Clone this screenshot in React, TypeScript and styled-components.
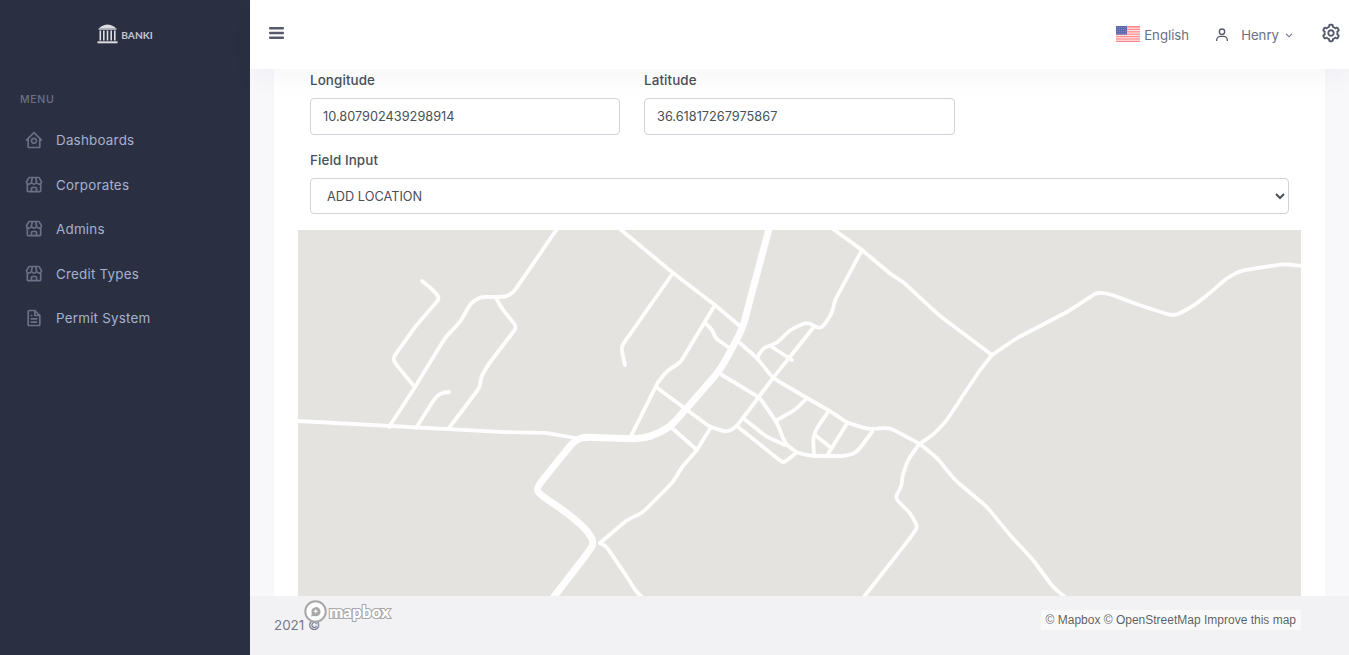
import React from "react";
import styled, { createGlobalStyle } from "styled-components";
import { BiHomeCircle, BiStore, BiFile, BiUser, BiCog, BiChevronDown } from "react-icons/bi";

const FONT = `Inter, "Noto Sans", "Liberation Sans", sans-serif`;

const Global = createGlobalStyle`
  html, body { margin: 0; padding: 0; height: 100%; overflow: hidden; background: #f8f8fb; }
  body { font-family: ${FONT}; font-size: 13.6px; color: #495057; }
  * { box-sizing: border-box; }
`;

const Shell = styled.div`
  display: flex;
  width: 100%;
  height: 100vh;
  overflow: hidden;
`;

const Sidebar = styled.aside`
  flex: 0 0 250px;
  background: #2a3042;
  display: flex;
  flex-direction: column;
`;

const LogoBox = styled.div`
  height: 70px;
  display: flex;
  align-items: center;
  justify-content: center;
  gap: 3px;
  padding-bottom: 2px;
`;

const LogoText = styled.span`
  font: 700 10.2px Lato, sans-serif;
  color: #c4c6cb;
  margin-top: 2px;
`;

const MenuTitle = styled.div`
  margin-top: 20px;
  padding-left: 20px;
  font-size: 10.5px;
  line-height: 20px;
  font-weight: 500;
  letter-spacing: 0.7px;
  color: #6a7187;
`;

const Nav = styled.nav`
  margin-top: 8px;
  display: flex;
  flex-direction: column;
`;

const NavRow = styled.a`
  display: flex;
  align-items: center;
  height: 44.5px;
  padding-left: 24px;
  color: #a6b0cf;
  font-size: 13.4px;
  letter-spacing: 0.22px;
  svg { flex: 0 0 20px; margin-right: 12px; color: #6a7187; }
`;

const Main = styled.div`
  flex: 1;
  min-width: 0;
  display: flex;
  flex-direction: column;
`;

const Header = styled.header`
  flex: 0 0 69px;
  background: #fff;
  display: flex;
  align-items: center;
  padding: 0 7px 3px 19px;
  box-shadow: 0 12px 24px rgba(18, 38, 63, 0.03);
  position: relative;
  z-index: 2;
  color: #555b6d;
`;

const Spacer = styled.div`
  flex: 1;
`;

const Burger = styled.svg`
  width: 15px;
  height: 12px;
  display: block;
`;

const HeaderText = styled.span`
  font-size: 13.2px;
  color: #6b7082;
  margin-top: 3px;
`;

const Lang = styled.div`
  display: flex;
  align-items: center;
  gap: 4px;
  margin-right: 25px;
`;

const Flag = styled.svg`
  width: 24px;
  height: 16px;
  margin-top: 2px;
  display: block;
`;

const UserBox = styled.div`
  display: flex;
  align-items: center;
  margin-right: 24px;
  svg:first-child { margin-right: 11px; margin-top: 3px; color: #555b6d; }
  svg:last-child { margin-left: 3px; margin-top: 3px; color: #74788d; }
`;

const Content = styled.main`
  flex: 1;
  min-height: 0;
  overflow: hidden;
  padding: 0 24px;
`;

const Card = styled.section`
  background: #fff;
  height: 100%;
  padding: 1px 24px 0;
`;

const FieldRow = styled.div`
  display: grid;
  grid-template-columns: 310px 311px;
  column-gap: 24px;
  padding: 0 12px;
`;

const Label = styled.label`
  display: block;
  font-size: 13.4px;
  line-height: 20px;
  font-weight: 500;
  letter-spacing: 0.1px;
  color: #495057;
  margin-bottom: 8px;
`;

const TextInput = styled.input`
  display: block;
  width: 100%;
  height: 37px;
  padding: 0 12px;
  border: 1px solid #ced4da;
  border-radius: 4px;
  background: #fff;
  color: #495057;
  font: 400 12.75px ${FONT};
`;

const SelectWrap = styled.div`
  margin-top: 15px;
  padding: 0 12px;
`;

const Select = styled.select`
  display: block;
  width: 100%;
  height: 36px;
  padding: 0 12px;
  border: 1px solid #ced4da;
  border-radius: 4px;
  background: #fff;
  color: #495057;
  font: 400 12.75px ${FONT};
`;

const MapBox = styled.div`
  margin-top: 16px;
  height: 366px;
  background: #e4e3df;
  overflow: hidden;
`;

const MapSvg = styled.svg`
  display: block;
  width: 100%;
  height: 100%;
`;

const Footer = styled.footer`
  flex: 0 0 59px;
  background: #f2f2f5;
  position: relative;
  padding: 19px 24px 0;
  font-size: 13.4px;
  line-height: 20px;
  color: #74788d;
`;

const MapboxLogo = styled.div`
  position: absolute;
  left: 54px;
  top: 4px;
  display: flex;
  align-items: center;
  gap: 2px;
`;

const MapboxWord = styled.span`
  font: 900 17px Lato, sans-serif;
  line-height: 22px;
  color: #fff;
  -webkit-text-stroke: 2.2px #a8a8a8;
  paint-order: stroke fill;
`;

const Attribution = styled.div`
  position: absolute;
  right: 48px;
  top: 14px;
  height: 20px;
  padding: 0 5px;
  background: rgba(255, 255, 255, 0.5);
  font: 400 12px/20px "Liberation Sans", Arial, sans-serif;
  color: rgba(0, 0, 0, 0.65);
  white-space: nowrap;
`;

type Pt = [number, number];

const roundedPath = (pts: Pt[], r = 5): string => {
  let d = `M${pts[0][0]} ${pts[0][1]}`;
  for (let i = 1; i < pts.length - 1; i++) {
    const [px, py] = pts[i - 1];
    const [x, y] = pts[i];
    const [nx, ny] = pts[i + 1];
    const l1 = Math.hypot(x - px, y - py);
    const l2 = Math.hypot(nx - x, ny - y);
    const a = Math.min(r, l1 / 2);
    const b = Math.min(r, l2 / 2);
    d += `L${(x - ((x - px) / l1) * a).toFixed(1)} ${(y - ((y - py) / l1) * a).toFixed(1)}`;
    d += `Q${x} ${y} ${(x + ((nx - x) / l2) * b).toFixed(1)} ${(y + ((ny - y) / l2) * b).toFixed(1)}`;
  }
  const last = pts[pts.length - 1];
  return `${d}L${last[0]} ${last[1]}`;
};

const thinRoads: Pt[][] = [
  [[422, 281], [433, 290], [440, 298], [415, 327], [393, 358], [395, 363], [413, 385]],
  [[389, 427], [415, 387], [445, 338], [460, 322], [471, 303], [480, 297], [505, 297], [513, 293], [557, 229]],
  [[496, 298], [503, 310], [517, 327], [488, 365], [481, 377], [480, 387], [465, 407], [449, 428]],
  [[449, 392], [441, 393], [435, 398], [416, 428]],
  [[625, 365], [621, 347], [673, 273]],
  [[620, 229], [673, 273], [715, 305], [741, 327]],
  [[298, 421], [500, 432], [547, 433], [575, 438]],
  [[600, 543], [627, 520], [642, 513], [673, 482], [682, 467], [697, 450], [711, 427]],
  [[600, 543], [606, 546], [627, 577], [637, 593], [645, 599]],
  [[715, 305], [680, 363], [668, 370], [658, 382], [655, 388], [631, 436]],
  [[705, 323], [713, 330], [715, 338], [731, 349]],
  [[656, 387], [710, 427], [727, 432], [735, 428], [743, 418], [773, 378], [813, 328]],
  [[672, 428], [697, 450]],
  [[722, 375], [760, 398], [777, 423], [785, 443], [797, 453], [813, 456], [847, 456], [857, 452], [872, 432]],
  [[740, 343], [757, 358], [773, 378], [807, 398], [828, 410], [848, 423], [868, 429], [890, 428], [920, 444], [937, 458], [955, 480], [987, 507], [1010, 535], [1033, 560], [1053, 587], [1066, 598]],
  [[777, 420], [795, 410], [807, 398]],
  [[743, 418], [767, 437], [785, 445]],
  [[738, 427], [782, 462], [785, 462], [796, 453]],
  [[828, 412], [817, 428], [813, 437], [814, 456]],
  [[815, 435], [830, 447]],
  [[846, 425], [828, 454]],
  [[757, 358], [763, 348], [777, 343], [790, 330], [807, 322], [818, 328], [823, 327], [832, 313], [835, 300], [862, 250]],
  [[772, 347], [792, 360]],
  [[833, 229], [862, 250], [893, 276], [902, 281], [940, 316], [992, 355]],
  [[992, 355], [1017, 338], [1067, 312], [1098, 292], [1113, 295], [1133, 303], [1170, 315], [1177, 315], [1193, 306], [1210, 293], [1227, 278], [1240, 271], [1283, 264], [1303, 266]],
  [[992, 355], [980, 370], [960, 400], [947, 420], [933, 435], [919, 444], [908, 460], [902, 477], [902, 485], [895, 498], [910, 513], [918, 527], [907, 542], [863, 598]],
];

const thickRoads: Pt[][] = [
  [[769, 229], [750, 300], [743, 327], [735, 343], [720, 370], [687, 408], [670, 427], [650, 437], [633, 439], [585, 437], [575, 440], [537, 487], [538, 493], [567, 513], [587, 530], [594, 542], [590, 550], [553, 598]],
];

const RoadMap = () => (
  <MapSvg viewBox="298 230 1003 366" preserveAspectRatio="none" aria-label="map">
    {thinRoads.map((pts, i) => (
      <path key={i} d={roundedPath(pts)} fill="none" stroke="#fefeff" strokeWidth={3.8} strokeLinecap="round" strokeLinejoin="round" />
    ))}
    {thickRoads.map((pts, i) => (
      <path key={i} d={roundedPath(pts, 9)} fill="none" stroke="#fefeff" strokeWidth={7} strokeLinecap="round" strokeLinejoin="round" />
    ))}
  </MapSvg>
);

const BankIcon = () => (
  <svg width="21" height="20" viewBox="0 0 21 20" fill="#dcdde0">
    <path d="M10.5 0.5C6 1 3.5 2.5 2 4.5h17C17.5 2.5 15 1 10.5 0.5z" />
    <rect x="1.5" y="4.5" width="18" height="1.2" />
    <rect x="2.5" y="6.5" width="1.6" height="10" />
    <rect x="6" y="6.5" width="1.6" height="10" />
    <rect x="9.7" y="6.5" width="1.6" height="10" />
    <rect x="13.4" y="6.5" width="1.6" height="10" />
    <rect x="17" y="6.5" width="1.6" height="10" />
    <rect x="0.5" y="17.3" width="20" height="2" />
  </svg>
);

const UsFlag = () => (
  <Flag viewBox="0 0 24 16">
    <rect width="24" height="16" fill="#fb8a8e" />
    {[1.6, 4, 6.4, 8.8, 11.2, 13.6].map((y) => (
      <rect key={y} y={y} width="24" height="1.2" fill="#fde4e4" />
    ))}
    <rect width="11" height="8.6" fill="#5f67ad" />
    {[1.5, 3.5, 5.5, 7.5].map((y) =>
      [1.5, 3.5, 5.5, 7.5, 9.5].map((x) => <circle key={`${x}-${y}`} cx={x} cy={y} r="0.4" fill="#aab0dc" />)
    )}
  </Flag>
);

const MapboxMark = () => (
  <svg width="23" height="23" viewBox="0 0 23 23">
    <circle cx="11.5" cy="11.5" r="10.2" fill="#fff" stroke="#a8a8a8" strokeWidth="2" />
    <path d="M7.2 16.4l.5-3a4.6 4.6 0 1 1 2.4 2.5z" fill="#a8a8a8" />
    <path d="M11.7 8.6l.7 1.9 1.9.7-1.9.7-.7 1.9-.7-1.9-1.9-.7 1.9-.7z" fill="#fff" />
  </svg>
);

const navItems = [
  { label: "Dashboards", Icon: BiHomeCircle },
  { label: "Corporates", Icon: BiStore },
  { label: "Admins", Icon: BiStore },
  { label: "Credit Types", Icon: BiStore },
  { label: "Permit System", Icon: BiFile },
];

export default function App() {
  return (
    <Shell>
      <Global />
      <Sidebar>
        <LogoBox>
          <BankIcon />
          <LogoText>BANKI</LogoText>
        </LogoBox>
        <MenuTitle>MENU</MenuTitle>
        <Nav>
          {navItems.map(({ label, Icon }) => (
            <NavRow key={label}>
              <Icon size={20} />
              {label}
            </NavRow>
          ))}
        </Nav>
      </Sidebar>
      <Main>
        <Header>
          <Burger viewBox="0 0 15 12" fill="currentColor">
            <rect y="0" width="15" height="2.4" rx="1" />
            <rect y="4.8" width="15" height="2.4" rx="1" />
            <rect y="9.6" width="15" height="2.4" rx="1" />
          </Burger>
          <Spacer />
          <Lang>
            <UsFlag />
            <HeaderText>English</HeaderText>
          </Lang>
          <UserBox>
            <BiUser size={16} />
            <HeaderText>Henry</HeaderText>
            <BiChevronDown size={14} />
          </UserBox>
          <BiCog size={22} />
        </Header>
        <Content>
          <Card>
            <FieldRow>
              <div>
                <Label>Longitude</Label>
                <TextInput readOnly value="10.807902439298914" />
              </div>
              <div>
                <Label>Latitude</Label>
                <TextInput readOnly value="36.61817267975867" />
              </div>
            </FieldRow>
            <SelectWrap>
              <Label>Field Input</Label>
              <Select defaultValue="add">
                <option value="add">ADD LOCATION</option>
              </Select>
            </SelectWrap>
            <MapBox>
              <RoadMap />
            </MapBox>
          </Card>
        </Content>
        <Footer>
          2021 ©
          <MapboxLogo>
            <MapboxMark />
            <MapboxWord>mapbox</MapboxWord>
          </MapboxLogo>
          <Attribution>© Mapbox © OpenStreetMap Improve this map</Attribution>
        </Footer>
      </Main>
    </Shell>
  );
}
